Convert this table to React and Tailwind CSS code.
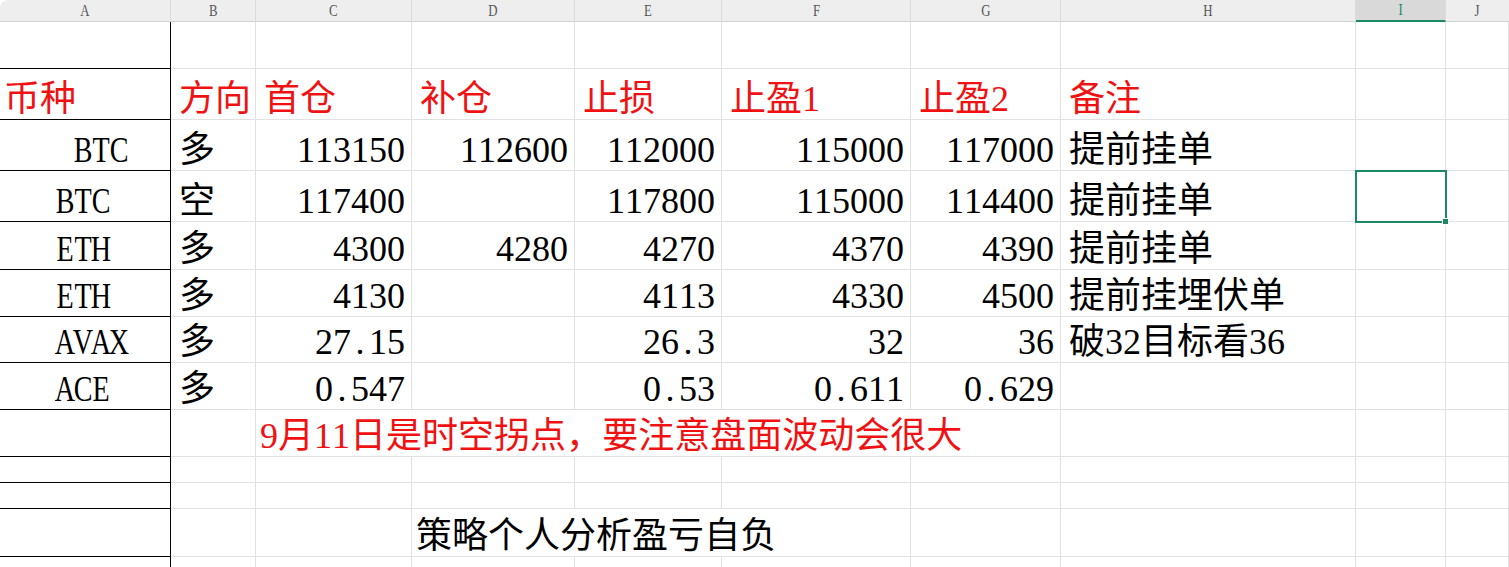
import React from 'react';

const COLS = ['A', 'B', 'C', 'D', 'E', 'F', 'G', 'H', 'I', 'J'];

// sheet font draws latin + digits half-width; fake it with fixed 0.5em boxes
const T = ({ s }) => (
    <>
        {Array.from(s || '').map((ch, i) =>
            /[A-Za-z0-9.]/.test(ch) ? (
                <span key={i} className="inline-flex w-[0.5em] justify-center font-['Liberation_Serif',serif]">
                    <span className={/[A-Za-z]/.test(ch) ? 'inline-block scale-x-[0.78]' : ''}>{ch}</span>
                </span>
            ) : (
                <span key={i}>{ch}</span>
            )
        )}
    </>
);

const Cell = ({ s, a, right, red, className = '' }) => (
    <div
        className={`flex items-end whitespace-nowrap border-b border-r leading-[40px] text-[36px] ${
            red ? 'text-[#f01212]' : 'text-black'
        } ${a ? 'border-black' : 'border-[#e1e1e1]'} ${right ? 'justify-end pr-[6px]' : 'pl-[8px]'} ${className}`}
    >
        {s ? <T s={s} /> : null}
    </div>
);

const trades = [
    { coin: 'BTC', pad: 'pl-[74px]', dir: '多', c: '113150', d: '112600', e: '112000', f: '115000', g: '117000', h: '提前挂单' },
    { coin: 'BTC', dir: '空', c: '117400', d: '', e: '117800', f: '115000', g: '114400', h: '提前挂单', selected: true },
    { coin: 'ETH', dir: '多', c: '4300', d: '4280', e: '4270', f: '4370', g: '4390', h: '提前挂单' },
    { coin: 'ETH', dir: '多', c: '4130', d: '', e: '4113', f: '4330', g: '4500', h: '提前挂埋伏单' },
    { coin: 'AVAX', dir: '多', c: '27.15', d: '', e: '26.3', f: '32', g: '36', h: '破32目标看36' },
    { coin: 'ACE', dir: '多', c: '0.547', d: '', e: '0.53', f: '0.611', g: '0.629', h: '' },
];

const EmptyRest = ({ from }) => COLS.slice(from).map((c) => <Cell key={c} />);

const App = () => {
    return (
        <div className="h-[567px] w-[1509px] overflow-hidden bg-white font-['Liberation_Serif','Noto_Sans_CJK_SC',serif]">
            <div className="grid grid-cols-[171px_85px_156px_163px_147px_189px_150px_295px_90px_63px] grid-rows-[22px_47px_51px_51px_51px_48px_47px_46px_47px_47px_26px_26px_48px_48px]">
                {/* column header */}
                {COLS.map((c, i) => (
                    <div
                        key={c}
                        className={`flex items-center justify-center text-[16px] leading-none ${
                            c === 'I'
                                ? 'border-b-2 border-b-[#1b8a64] bg-[#d9d9d9] text-[#1b8a64]'
                                : 'border-b border-b-[#d3d3d3] bg-[#eeeeee] text-[#555]'
                        } ${i === 0 ? 'rounded-tl-[8px]' : ''} ${i < 9 ? 'border-r border-r-[#dcdcdc]' : ''}`}
                    >
                        <span className="inline-block scale-x-[0.8]">{c}</span>
                    </div>
                ))}

                {/* row 1 */}
                <Cell a />
                <EmptyRest from={1} />

                {/* row 2 - titles */}
                <Cell a red s="币种" className="!pl-[4px]" />
                {['方向', '首仓', '补仓', '止损', '止盈1', '止盈2', '备注'].map((t) => (
                    <Cell key={t} red s={t} />
                ))}
                <EmptyRest from={8} />

                {/* trades */}
                {trades.map((r, idx) => (
                    <React.Fragment key={idx}>
                        <Cell a s={r.coin} className={r.pad || '!pl-[56px]'} />
                        <Cell s={r.dir} />
                        <Cell right s={r.c} />
                        <Cell right s={r.d} />
                        <Cell right s={r.e} />
                        <Cell right s={r.f} />
                        <Cell right s={r.g} />
                        <Cell s={r.h} />
                        <div className="relative border-b border-r border-[#e1e1e1]">
                            {r.selected && (
                                <div className="absolute -left-px -top-px z-10 h-[53px] w-[92px] border-2 border-[#1b8a64]">
                                    <div className="absolute -bottom-[4px] -right-[4px] h-[7px] w-[7px] border border-white bg-[#1b8a64]" />
                                </div>
                            )}
                        </div>
                        <Cell />
                    </React.Fragment>
                ))}

                {/* note row */}
                <Cell a />
                <Cell />
                <Cell red s="9月11日是时空拐点，要注意盘面波动会很大" className="col-span-5 !pl-[4px]" />
                <EmptyRest from={7} />

                {/* spacer rows */}
                <Cell a />
                <EmptyRest from={1} />
                <Cell a />
                <EmptyRest from={1} />

                {/* footer remark */}
                <Cell a />
                <Cell />
                <Cell />
                <Cell s="策略个人分析盈亏自负" className="col-span-3 !pl-[4px]" />
                <EmptyRest from={6} />

                <Cell a />
                <EmptyRest from={1} />
            </div>
        </div>
    );
};

export default App;
